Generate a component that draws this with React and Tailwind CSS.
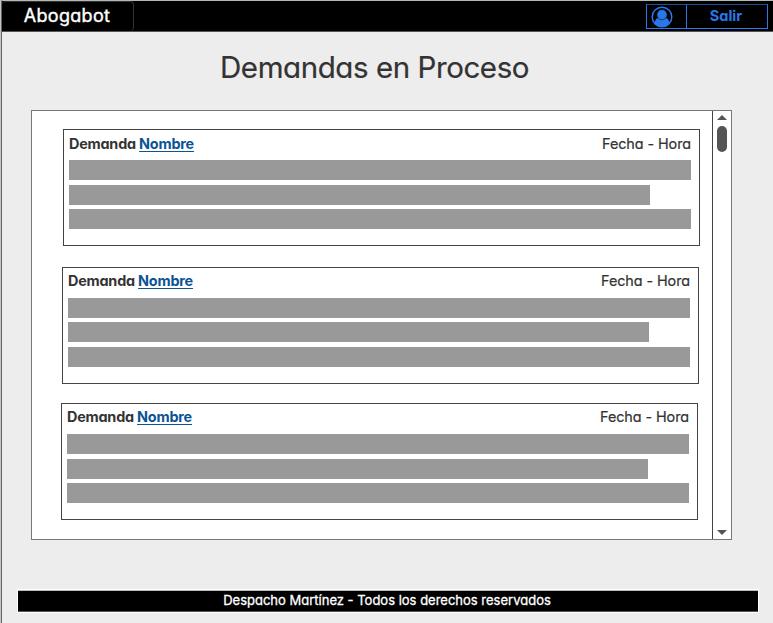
const cards = [
  { id: 1, box: "ml-[31px] pt-1", heading: "h-[21px]", middle: "mt-[5px] mb-1" },
  { id: 2, box: "ml-[30px] mt-[21px] pt-[3px]", heading: "h-[22px]", middle: "mt-1 mb-[5px]" },
  { id: 3, box: "ml-[29px] mt-[19px] pt-[3px]", heading: "h-[22px]", middle: "mt-[5px] mb-1" },
];

function Card({ box, heading, middle }) {
  return (
    <article className={`h-[117px] w-[637px] shrink-0 border border-[#444] pl-[5px] text-[#333] ${box}`}>
      <div className={`flex w-[622px] justify-between whitespace-nowrap text-[14.4px] leading-5 ${heading}`}>
        <h2 className="font-bold tracking-[-0.2px]">
          Demanda <a className="text-[#0b5394] underline decoration-1 underline-offset-2">Nombre</a>
        </h2>
        <span className="tracking-[-0.08px] [-webkit-text-stroke:0.2px_currentColor]">Fecha - Hora</span>
      </div>
      <div className="mt-[5px] flex flex-col">
        <div className="h-5 w-[622px] bg-[#999]" />
        <div className={`h-5 w-[581px] bg-[#999] ${middle}`} />
        <div className="h-5 w-[622px] bg-[#999]" />
      </div>
    </article>
  );
}

export default function App() {
  return (
    <div className="flex h-[623px] w-[773px] border-l border-[#c4c4c4] font-['Inter',sans-serif] [font-feature-settings:'cv11']">
      <div className="flex w-[772px] flex-col overflow-hidden border-l border-t border-t-[#b5b9b6] border-l-[#666] bg-[#ededed]">
        <header className="flex h-[31px] shrink-0 justify-between border-b border-[#555] bg-black">
          <div className="flex h-[30px] w-[132px] justify-center rounded-sm border-r border-t border-[#333] pr-px text-[18px] leading-[27px] tracking-[0.3px] text-white [-webkit-text-stroke:0.4px_currentColor]">
            Abogabot
          </div>
          <div className="mr-[5px] mt-[3px] flex h-[25px] w-[122px] border border-[#2e78e8] border-t-[#1c4f96] text-[#2878e8]">
            <div className="flex w-[40px] items-center border-r border-[#2e78e8] pl-[4px]">
              <svg className="size-[22px]" viewBox="0 0 22 22">
                <circle cx="11" cy="11" r="9.8" fill="none" stroke="currentColor" strokeWidth="1.5" />
                <path d="M3.600 17C3.800 13.500 6 11.800 8.500 11.800h5c2.500 0 4.700 1.700 4.900 5.200-3.200 5-11.600 5-14.800 0z" fill="currentColor" />
                <circle cx="11" cy="8.700" r="5.100" fill="currentColor" stroke="black" strokeWidth="0.500" />
              </svg>
            </div>
            <button className="flex-1 pb-[2px] pr-[2px] text-[14.5px] font-bold leading-5">Salir</button>
          </div>
        </header>
        <h1 className="ml-[218px] mt-[15px] h-[40px] whitespace-nowrap text-[29.5px] leading-[40px] tracking-[-0.43px] text-[#333] [-webkit-text-stroke:0.2px_currentColor]">
          Demandas en Proceso
        </h1>
        <main className="ml-[29px] mt-[23px] flex h-[430px] w-[701px] shrink-0 border border-[#777] bg-white">
          <section className="flex w-[680px] flex-col pt-[18px]">
            {cards.map((card) => (
              <Card key={card.id} box={card.box} heading={card.heading} middle={card.middle} />
            ))}
          </section>
          <div className="flex flex-1 flex-col items-center border-l border-[#444]">
            <svg className="mt-1 h-[5px] w-[10px]" viewBox="0 0 10 5">
              <path d="M0 5L5 0l5 5z" fill="#555" />
            </svg>
            <div className="mt-[6px] h-[26px] w-[10px] rounded-full bg-[#555]" />
            <svg className="mb-[4px] mt-auto h-[5px] w-[10px]" viewBox="0 0 10 5">
              <path d="M0 0h10L5 5z" fill="#555" />
            </svg>
          </div>
        </main>
        <footer className="ml-4 mt-[50px] h-[22px] w-[740px] shrink-0 border-b border-t border-b-[#555] border-t-[#bbb] bg-black pr-[2px] text-center text-[13px] leading-[18px] text-white shadow-[0_0_0_1px_white] [-webkit-text-stroke:0.3px_currentColor]">
          Despacho Martínez - Todos los derechos reservados
        </footer>
      </div>
    </div>
  );
}
